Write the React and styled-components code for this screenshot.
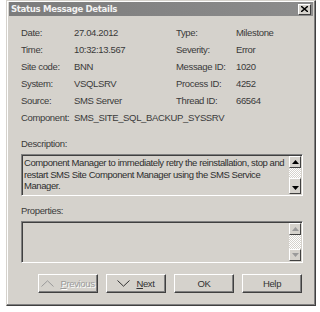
import React from "react";
import styled, { createGlobalStyle } from "styled-components";

const Global = createGlobalStyle`
  body {
    margin: 0;
    background: #ffffff;
    font-family: "Liberation Sans", Arial, sans-serif;
  }
`;

const Page = styled.div`
  width: 320px;
  height: 312px;
  padding: 0 4px 0 6px;
  box-sizing: border-box;
`;

const Window = styled.div`
  width: 310px;
  height: 306px;
  box-sizing: border-box;
  background: #d5d2cc;
  border: 1px solid #d5d2cc;
  border-right-color: #404040;
  border-bottom-color: #404040;
  box-shadow: inset -1px -1px 0 #808080, inset 1px 1px 0 #ffffff;
  padding: 1px 2px 2px 2px;
  display: flex;
  flex-direction: column;
`;

const TitleBar = styled.div`
  height: 14px;
  background: linear-gradient(to right, #7c7c7c, #8c8c8c);
  display: flex;
  align-items: center;
  justify-content: space-between;
  padding: 0 2px 0 2px;
`;

const Title = styled.span`
  color: #f2f2f2;
  font-family: "DejaVu Sans", Verdana, sans-serif;
  font-weight: bold;
  font-size: 8.6px;
  letter-spacing: -0.35px;
`;

const CloseBtn = styled.div`
  width: 13px;
  height: 11px;
  background: #d5d2cc;
  border: 1px solid;
  border-color: #ffffff #404040 #404040 #ffffff;
  display: flex;
  align-items: center;
  justify-content: center;
  box-sizing: border-box;
`;

const Body = styled.div`
  padding: 8px 10px 0 12px;
  display: flex;
  flex-direction: column;
  color: #3a3a3a;
  font-size: 9.5px;
  letter-spacing: -0.35px;
`;

const Grid = styled.div`
  display: grid;
  grid-template-columns: 53px 102px 60px auto;
  grid-auto-rows: 17px;
  align-items: center;
`;

const Cell = styled.span`
  white-space: nowrap;
  grid-column: ${(p) => p.$span || "auto"};
`;

const Label = styled.div`
  margin-top: ${(p) => p.$top}px;
  height: 14px;
`;

const Box = styled.div`
  margin-top: 2px;
  height: 42px;
  box-sizing: border-box;
  border: 1px solid;
  border-color: #808080 #ffffff #ffffff #808080;
  box-shadow: inset 1px 1px 0 #404040;
  display: flex;
  background: #d5d2cc;
`;

const BoxText = styled.div`
  flex: 1;
  padding: 2px 0 0 2px;
  line-height: 11.5px;
  letter-spacing: -0.42px;
  color: #2e2e2e;
`;

const Scroll = styled.div`
  width: 12px;
  margin: 1px 1px 1px 0;
  display: flex;
  flex-direction: column;
  justify-content: space-between;
  background-image: repeating-conic-gradient(#ffffff 0 25%, #d5d2cc 0 50%);
  background-size: 2px 2px;
`;

const ScrollBtn = styled.div`
  height: ${(p) => p.$h || 12}px;
  background: #d5d2cc;
  box-sizing: border-box;
  border: 1px solid;
  border-color: #ffffff #404040 #404040 #ffffff;
  display: flex;
  align-items: ${(p) => (p.$end ? "flex-end" : "center")};
  justify-content: center;
  padding-bottom: ${(p) => (p.$end ? 3 : 0)}px;
`;

const Buttons = styled.div`
  display: flex;
  justify-content: flex-end;
  gap: 8px;
  margin-top: 11px;
  padding-right: 1px;
`;

const Button = styled.div`
  width: 60px;
  height: 19px;
  box-sizing: border-box;
  border: 1px solid;
  border-color: #ffffff #404040 #404040 #ffffff;
  box-shadow: inset -1px -1px 0 #808080;
  display: flex;
  align-items: center;
  justify-content: center;
  gap: 6px;
  color: ${(p) => (p.$disabled ? "#9a9a9a" : "#333")};
  text-shadow: ${(p) => (p.$disabled ? "1px 1px 0 #ffffff" : "none")};
`;

const Triangle = ({ up, color }) => (
  <svg width="7" height="4" viewBox="0 0 7 4">
    <path d={up ? "M0 4 L3.5 0 L7 4 Z" : "M0 0 L3.5 4 L7 0 Z"} fill={color} />
  </svg>
);

const Chevron = ({ up, color }) => (
  <svg width="13" height="7" viewBox="0 0 13 7">
    <polyline
      points={up ? "0.5,6.5 6.5,0.8 12.5,6.5" : "0.5,0.5 6.5,6.2 12.5,0.5"}
      fill="none"
      stroke={color}
      strokeWidth="1"
    />
  </svg>
);

const ScrollBar = ({ faded }) => (
  <Scroll>
    <ScrollBtn>
      <Triangle up color={faded ? "#9a9a9a" : "#000"} />
    </ScrollBtn>
    <ScrollBtn $h={faded ? 12 : 16} $end>
      <Triangle color={faded ? "#9a9a9a" : "#000"} />
    </ScrollBtn>
  </Scroll>
);

const rows = [
  ["Date:", "27.04.2012", "Type:", "Milestone"],
  ["Time:", "10:32:13.567", "Severity:", "Error"],
  ["Site code:", "BNN", "Message ID:", "1020"],
  ["System:", "VSQLSRV", "Process ID:", "4252"],
  ["Source:", "SMS Server", "Thread ID:", "66564"],
];

export default function App() {
  return (
    <Page>
      <Global />
      <Window>
        <TitleBar>
          <Title>Status Message Details</Title>
          <CloseBtn>
            <svg width="7" height="6" viewBox="0 0 7 6">
              <path d="M0 0 L7 6 M7 0 L0 6" stroke="#000" strokeWidth="1.4" />
            </svg>
          </CloseBtn>
        </TitleBar>
        <Body>
          <Grid>
            {rows.map((r, i) => r.map((c, j) => <Cell key={i + "-" + j}>{c}</Cell>))}
            <Cell>Component:</Cell>
            <Cell $span="2 / 5">SMS_SITE_SQL_BACKUP_SYSSRV</Cell>
          </Grid>
          <Label $top={12}>Description:</Label>
          <Box>
            <BoxText>
              Component Manager to immediately retry the reinstallation, stop and
              restart SMS Site Component Manager using the SMS Service Manager.
            </BoxText>
            <ScrollBar />
          </Box>
          <Label $top={9}>Properties:</Label>
          <Box>
            <BoxText />
            <ScrollBar faded />
          </Box>
          <Buttons>
            <Button $disabled>
              <Chevron up color="#9a9a9a" />
              <span>
                <u>P</u>revious
              </span>
            </Button>
            <Button>
              <Chevron color="#333" />
              <span>
                <u>N</u>ext
              </span>
            </Button>
            <Button>OK</Button>
            <Button>Help</Button>
          </Buttons>
        </Body>
      </Window>
    </Page>
  );
}
